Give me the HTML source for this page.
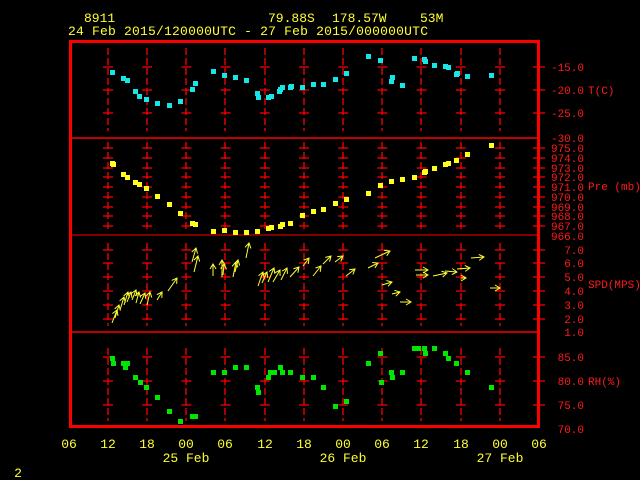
<!DOCTYPE html>
<html><head><style>
html,body{margin:0;padding:0;background:#000;width:640px;height:480px;overflow:hidden}
svg{display:block}
text{font-family:"Liberation Mono","DejaVu Sans Mono",monospace;white-space:pre}
</style></head><body>
<svg width="640" height="480" viewBox="0 0 640 480" xmlns="http://www.w3.org/2000/svg">
<defs>
<marker id="ah" markerWidth="8" markerHeight="8" refX="6" refY="4" orient="auto" markerUnits="userSpaceOnUse">
<polyline points="1,1 6,4 1,7" fill="none" stroke="#ffff33" stroke-width="1"/>
</marker>
</defs>
<g fill="#ffff33" font-size="13">
<text x="84" y="22">8911</text>
<text x="268" y="22">79.88S</text><text x="332" y="22">178.57W</text><text x="420" y="22">53M</text>
<text x="68" y="35" textLength="360">24 Feb 2015/120000UTC - 27 Feb 2015/000000UTC</text>
</g>
<g stroke="#ff0000" stroke-width="1.3" fill="none">
<path stroke-dasharray="7,3" d="M108 48V131M147 48V131M186 48V131M225 48V131M265 48V131M304 48V131M343 48V131M382 48V131M421 48V131M461 48V131M500 48V131
M108 142V232M147 142V232M186 142V232M225 142V232M265 142V232M304 142V232M343 142V232M382 142V232M421 142V232M461 142V232M500 142V232
M108 243V326M147 243V326M186 243V326M225 243V326M265 243V326M304 243V326M343 243V326M382 243V326M421 243V326M461 243V326M500 243V326
M108 348V421M147 348V421M186 348V421M225 348V421M265 348V421M304 348V421M343 348V421M382 348V421M421 348V421M461 348V421M500 348V421"/>
<path stroke-dasharray="10,29.2" d="M103 67H512M103 90H512M103 113H512M103 148H512M103 158H512M103 168H512M103 177H512M103 187H512M103 197H512M103 207H512M103 216H512M103 226H512M103 250H512M103 263H512M103 277H512M103 291H512M103 305H512M103 319H512M103 357H512M103 381H512M103 405H512"/>
<path d="M533 67h12M533 90h12M533 113h12M533 148h12M533 158h12M533 168h12M533 177h12M533 187h12M533 197h12M533 207h12M533 216h12M533 226h12M533 250h12M533 263h12M533 277h12M533 291h12M533 305h12M533 319h12M533 357h12M533 381h12M533 405h12"/>
</g>
<rect x="70.5" y="41.5" width="468" height="385" fill="none" stroke="#ff0000" stroke-width="3"/>
<g stroke="#ff0000">
<line x1="70" y1="138" x2="540" y2="138" stroke-width="1.5"/>
<line x1="70" y1="235" x2="540" y2="235" stroke-width="1"/>
<line x1="70" y1="332" x2="540" y2="332" stroke-width="1.5"/>
</g>
<g fill="#ff1a1a" font-size="11" text-anchor="end">
<text x="584" y="71">-15.0</text><text x="584" y="94">-20.0</text><text x="584" y="117">-25.0</text><text x="584" y="142">-30.0</text>
<text x="584" y="152">975.0</text><text x="584" y="162">974.0</text><text x="584" y="172">973.0</text><text x="584" y="181">972.0</text><text x="584" y="191">971.0</text><text x="584" y="201">970.0</text><text x="584" y="211">969.0</text><text x="584" y="220">968.0</text><text x="584" y="230">967.0</text><text x="584" y="240">966.0</text>
<text x="584" y="254">7.0</text><text x="584" y="267">6.0</text><text x="584" y="281">5.0</text><text x="584" y="295">4.0</text><text x="584" y="309">3.0</text><text x="584" y="323">2.0</text><text x="584" y="336">1.0</text>
<text x="584" y="361">85.0</text><text x="584" y="385">80.0</text><text x="584" y="409">75.0</text><text x="584" y="433">70.0</text>
</g>
<g fill="#ff1a1a" font-size="11">
<text x="588" y="94">T(C)</text>
<text x="588" y="190">Pre (mb)</text>
<text x="588" y="288">SPD(MPS)</text>
<text x="588" y="385">RH(%)</text>
</g>
<g fill="#17e6e6">
<rect x="110" y="70" width="5" height="5"/><rect x="121" y="76" width="5" height="5"/><rect x="125" y="78" width="5" height="5"/><rect x="133" y="89" width="5" height="5"/><rect x="137" y="94" width="5" height="5"/><rect x="144" y="97" width="5" height="5"/><rect x="155" y="101" width="5" height="5"/><rect x="167" y="103" width="5" height="5"/><rect x="178" y="99" width="5" height="5"/><rect x="190" y="87" width="5" height="5"/><rect x="193" y="81" width="5" height="5"/><rect x="211" y="69" width="5" height="5"/><rect x="222" y="73" width="5" height="5"/><rect x="233" y="75" width="5" height="5"/><rect x="244" y="78" width="5" height="5"/><rect x="255" y="91" width="5" height="5"/><rect x="256" y="95" width="5" height="5"/><rect x="266" y="95" width="5" height="5"/><rect x="269" y="94" width="5" height="5"/><rect x="277" y="89" width="5" height="5"/><rect x="278" y="87" width="5" height="5"/><rect x="280" y="85" width="5" height="5"/><rect x="288" y="85" width="5" height="5"/><rect x="289" y="84" width="5" height="5"/><rect x="300" y="85" width="5" height="5"/><rect x="311" y="82" width="5" height="5"/><rect x="321" y="82" width="5" height="5"/><rect x="333" y="77" width="5" height="5"/><rect x="344" y="71" width="5" height="5"/><rect x="366" y="54" width="5" height="5"/><rect x="378" y="58" width="5" height="5"/><rect x="389" y="79" width="5" height="5"/><rect x="390" y="75" width="5" height="5"/><rect x="400" y="83" width="5" height="5"/><rect x="412" y="56" width="5" height="5"/><rect x="422" y="57" width="5" height="5"/><rect x="423" y="59" width="5" height="5"/><rect x="432" y="63" width="5" height="5"/><rect x="443" y="64" width="5" height="5"/><rect x="446" y="65" width="5" height="5"/><rect x="454" y="72" width="5" height="5"/><rect x="455" y="71" width="5" height="5"/><rect x="465" y="74" width="5" height="5"/><rect x="489" y="73" width="5" height="5"/>
</g>
<g fill="#ffff1a">
<rect x="110" y="161" width="5" height="5"/><rect x="111" y="162" width="5" height="5"/><rect x="121" y="172" width="5" height="5"/><rect x="125" y="175" width="5" height="5"/><rect x="133" y="180" width="5" height="5"/><rect x="137" y="182" width="5" height="5"/><rect x="144" y="186" width="5" height="5"/><rect x="155" y="194" width="5" height="5"/><rect x="167" y="202" width="5" height="5"/><rect x="178" y="211" width="5" height="5"/><rect x="190" y="221" width="5" height="5"/><rect x="193" y="222" width="5" height="5"/><rect x="211" y="229" width="5" height="5"/><rect x="222" y="228" width="5" height="5"/><rect x="233" y="230" width="5" height="5"/><rect x="244" y="230" width="5" height="5"/><rect x="255" y="229" width="5" height="5"/><rect x="266" y="226" width="5" height="5"/><rect x="269" y="225" width="5" height="5"/><rect x="278" y="224" width="5" height="5"/><rect x="280" y="222" width="5" height="5"/><rect x="288" y="221" width="5" height="5"/><rect x="300" y="213" width="5" height="5"/><rect x="311" y="209" width="5" height="5"/><rect x="321" y="207" width="5" height="5"/><rect x="333" y="201" width="5" height="5"/><rect x="344" y="197" width="5" height="5"/><rect x="366" y="191" width="5" height="5"/><rect x="378" y="183" width="5" height="5"/><rect x="389" y="179" width="5" height="5"/><rect x="400" y="177" width="5" height="5"/><rect x="412" y="175" width="5" height="5"/><rect x="422" y="170" width="5" height="5"/><rect x="423" y="169" width="5" height="5"/><rect x="432" y="166" width="5" height="5"/><rect x="443" y="162" width="5" height="5"/><rect x="446" y="161" width="5" height="5"/><rect x="454" y="158" width="5" height="5"/><rect x="465" y="152" width="5" height="5"/><rect x="489" y="143" width="5" height="5"/>
</g>
<g fill="#00e600">
<rect x="110" y="356" width="5" height="5"/><rect x="111" y="361" width="5" height="5"/><rect x="121" y="361" width="5" height="5"/><rect x="123" y="365" width="5" height="5"/><rect x="125" y="361" width="5" height="5"/><rect x="133" y="375" width="5" height="5"/><rect x="138" y="380" width="5" height="5"/><rect x="144" y="385" width="5" height="5"/><rect x="155" y="395" width="5" height="5"/><rect x="167" y="409" width="5" height="5"/><rect x="178" y="419" width="5" height="5"/><rect x="190" y="414" width="5" height="5"/><rect x="193" y="414" width="5" height="5"/><rect x="211" y="370" width="5" height="5"/><rect x="222" y="370" width="5" height="5"/><rect x="233" y="365" width="5" height="5"/><rect x="244" y="365" width="5" height="5"/><rect x="255" y="385" width="5" height="5"/><rect x="256" y="390" width="5" height="5"/><rect x="266" y="375" width="5" height="5"/><rect x="268" y="370" width="5" height="5"/><rect x="272" y="370" width="5" height="5"/><rect x="278" y="365" width="5" height="5"/><rect x="280" y="370" width="5" height="5"/><rect x="288" y="370" width="5" height="5"/><rect x="300" y="375" width="5" height="5"/><rect x="311" y="375" width="5" height="5"/><rect x="321" y="385" width="5" height="5"/><rect x="333" y="404" width="5" height="5"/><rect x="344" y="399" width="5" height="5"/><rect x="366" y="361" width="5" height="5"/><rect x="378" y="351" width="5" height="5"/><rect x="379" y="380" width="5" height="5"/><rect x="389" y="370" width="5" height="5"/><rect x="390" y="375" width="5" height="5"/><rect x="400" y="370" width="5" height="5"/><rect x="412" y="346" width="5" height="5"/><rect x="416" y="346" width="5" height="5"/><rect x="422" y="346" width="5" height="5"/><rect x="423" y="351" width="5" height="5"/><rect x="432" y="346" width="5" height="5"/><rect x="443" y="351" width="5" height="5"/><rect x="446" y="356" width="5" height="5"/><rect x="454" y="361" width="5" height="5"/><rect x="465" y="370" width="5" height="5"/><rect x="489" y="385" width="5" height="5"/>
</g>
<g stroke="#ffff33" stroke-width="1" fill="none" marker-end="url(#ah)">
<line x1="112" y1="323" x2="117" y2="310"/><line x1="115" y1="318" x2="119" y2="305"/><line x1="120" y1="310" x2="124" y2="297"/><line x1="124" y1="305" x2="128" y2="292"/><line x1="127" y1="302" x2="131" y2="292"/><line x1="132" y1="300" x2="136" y2="290"/><line x1="136" y1="303" x2="139" y2="292"/><line x1="140" y1="304" x2="145" y2="293"/><line x1="147" y1="305" x2="150" y2="292"/><line x1="157" y1="300" x2="162" y2="292"/><line x1="168" y1="291" x2="177" y2="278"/><line x1="192" y1="262" x2="196" y2="248"/><line x1="194" y1="272" x2="198" y2="256"/><line x1="213" y1="276" x2="213" y2="264"/><line x1="222" y1="277" x2="222" y2="260"/><line x1="223" y1="275" x2="224" y2="264"/><line x1="233" y1="277" x2="236" y2="262"/><line x1="235" y1="272" x2="238" y2="260"/><line x1="246" y1="258" x2="249" y2="243"/><line x1="258" y1="286" x2="263" y2="272"/><line x1="262" y1="283" x2="267" y2="272"/><line x1="268" y1="282" x2="274" y2="268"/><line x1="273" y1="282" x2="280" y2="270"/><line x1="281" y1="280" x2="287" y2="268"/><line x1="290" y1="277" x2="299" y2="267"/><line x1="303" y1="266" x2="309" y2="258"/><line x1="313" y1="276" x2="321" y2="266"/><line x1="323" y1="264" x2="331" y2="256"/><line x1="335" y1="262" x2="343" y2="256"/><line x1="346" y1="276" x2="355" y2="269"/><line x1="368" y1="268" x2="378" y2="263"/><line x1="375" y1="258" x2="390" y2="251"/><line x1="382" y1="285" x2="392" y2="282"/><line x1="392" y1="294" x2="400" y2="292"/><line x1="400" y1="302" x2="411" y2="302"/><line x1="415" y1="270" x2="428" y2="270"/><line x1="416" y1="275" x2="428" y2="275"/><line x1="433" y1="276" x2="447" y2="273"/><line x1="445" y1="271" x2="457" y2="272"/><line x1="457" y1="269" x2="470" y2="268"/><line x1="461" y1="278" x2="466" y2="278"/><line x1="471" y1="258" x2="484" y2="257"/><line x1="490" y1="288" x2="500" y2="288"/>
</g>
<g fill="#ffff33" font-size="13" text-anchor="middle">
<text x="69" y="448">06</text><text x="108" y="448">12</text><text x="147" y="448">18</text><text x="186" y="448">00</text><text x="225" y="448">06</text><text x="265" y="448">12</text><text x="304" y="448">18</text><text x="343" y="448">00</text><text x="382" y="448">06</text><text x="421" y="448">12</text><text x="461" y="448">18</text><text x="500" y="448">00</text><text x="539" y="448">06</text>
<text x="186" y="462">25 Feb</text><text x="343" y="462">26 Feb</text><text x="500" y="462">27 Feb</text>
<text x="18" y="477">2</text>
</g>
</svg>
</body></html>
